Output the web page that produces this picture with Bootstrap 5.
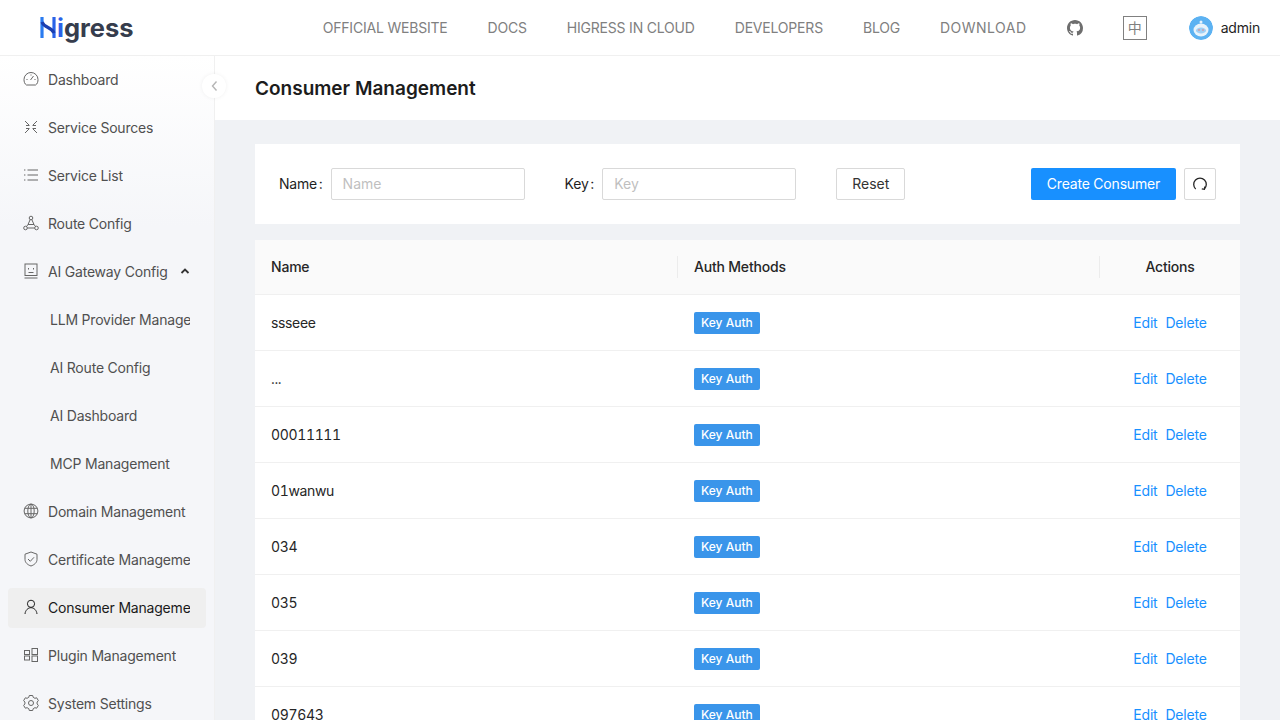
<!DOCTYPE html>
<html lang="en">
<head>
    <meta charset="UTF-8">
    <meta name="viewport" content="width=device-width, initial-scale=1.0">
    <title>Consumer Management</title>
    <link href="https://cdn.jsdelivr.net/npm/bootstrap@5.3.0/dist/css/bootstrap.min.css" rel="stylesheet">
    <style>
        html, body { height: 100%; }
        body {
            font-family: Inter, "Liberation Sans", sans-serif;
            font-size: 14px;
            letter-spacing: -0.2px;
            color: #1f1f1f;
            overflow: hidden;
            background: #f0f2f5;
        }
        .top-bar { height: 56px; background: #fff; border-bottom: 1px solid #f0f0f0; padding-left: 40px; padding-right: 20px; }
        .logo-text { font-size: 25.5px; font-weight: 700; color: #363d4d; line-height: 1; letter-spacing: 0; margin-left: 1px; }
        .logo-i { color: #2a62e8; }
        .top-links { gap: 40px; margin-right: 40px; }
        .top-links a { color: #808080; text-decoration: none; text-transform: uppercase; letter-spacing: -0.2px; }
        .top-links a:last-child { letter-spacing: 0.5px; }
        .lang-box { width: 24px; height: 24px; border: 1px solid #808080; color: #808080; font-family: "Noto Sans CJK SC", sans-serif; margin: 0 42px 0 40px; }
        .avatar { width: 24px; height: 24px; border-radius: 50%; margin-right: 8px; }
        .shell { height: 664px; }
        .side-menu { width: 215px; flex: none; position: relative; border-right: 1px solid #f0f0f0; background: linear-gradient(#fff, #f5f6f9 170px); padding: 4px 8px; }
        .menu-entry { height: 40px; margin-bottom: 8px; padding: 0 16px 2px 16px; border-radius: 4px; color: #505050; white-space: nowrap; }
        .menu-entry svg { width: 16px; height: 16px; flex: none; margin: 0 9px 0 -1px; fill: none; stroke: #666; stroke-width: 1; }
        .menu-entry span { overflow: hidden; flex: 0 1 auto; }
        .menu-sub { padding-left: 42px; }
        .menu-on { background: #efefef; color: #1a1a1a; }
        .menu-on svg { stroke: #222; }
        .menu-caret { width: 10px !important; height: 10px !important; margin: 0 0 0 12px !important; stroke: #333 !important; stroke-width: 1.8 !important; }
        .collapse-btn { position: absolute; right: -12px; top: 18px; width: 24px; height: 24px; border-radius: 50%; background: #fff; box-shadow: 0 0 4px rgba(0,0,0,.06); z-index: 2; }
        .page-head { height: 64px; background: #fff; padding: 2px 0 0 40px; font-size: 19px; font-weight: 600; letter-spacing: 0; color: #1c1c1c; }
        .page-body { padding: 24px 40px; }
        .filter-box { height: 80px; background: #fff; padding: 0 24px; margin-bottom: 16px; }
        .filter-label { margin-right: 8px; padding-bottom: 2px; word-spacing: -2px; }
        .filter-input { width: 194px; height: 32px; border: 1px solid #d9d9d9; border-radius: 2px; padding: 0 11px 2px; font-size: 14px; color: #333; outline: none; margin-right: 40px; }
        .filter-input::placeholder { color: #bfbfbf; }
        .plain-btn { height: 32px; border: 1px solid #d9d9d9; border-radius: 2px; background: #fff; color: #333; font-size: 14px; padding: 0 15px 2px; }
        .main-btn { height: 32px; border: 0; border-radius: 2px; background: #1890ff; color: #fff; font-size: 14px; letter-spacing: -0.2px; padding: 0 16px 2px; margin-right: 8px; }
        .icon-btn { width: 32px; padding: 0; }
        .data-table { table-layout: fixed; width: 100%; margin: 0; background: #fff; --bs-table-bg: transparent; }
        .data-table th { height: 54px; background: #fafafa; font-weight: 500; padding: 0 16px; vertical-align: middle; border-bottom: 1px solid #f0f0f0; color: #262626; position: relative; }
        .data-table td { height: 56px; padding: 0 16px; vertical-align: middle; border-bottom: 1px solid #f0f0f0; color: #262626; }
        .data-table td:first-child { font-variant-numeric: tabular-nums; letter-spacing: -0.35px; }
        .head-split::after { content: ""; position: absolute; right: 0; top: 16px; height: 22px; width: 1px; background: #ececec; }
        .auth-tag { display: inline-block; height: 22px; line-height: 21px; padding: 0 7px; background: #3a95ea; color: #fff; font-size: 12px; font-weight: 500; letter-spacing: 0; border-radius: 2px; }
        .row-link { color: #1890ff; text-decoration: none; margin-right: 8px; }
    </style>
</head>
<body>
    <!-- Top bar -->
    <header class="top-bar d-flex align-items-center">
        <div class="d-flex align-items-center">
            <svg width="16" height="23" viewBox="0 0 16 23" fill="none">
                <path d="M2 1v21" stroke="#2a7bf0" stroke-width="3.2"/>
                <path d="M14 1v21" stroke="#2a62e8" stroke-width="3.2"/>
                <path d="M2 6c2 6 10 5 12 11" stroke="#1c3fb0" stroke-width="3.2"/>
            </svg>
            <span class="logo-text"><span class="logo-i">i</span>gress</span>
        </div>
        <nav class="top-links d-flex ms-auto">
            <a href="#">Official Website</a>
            <a href="#">Docs</a>
            <a href="#">Higress in Cloud</a>
            <a href="#">Developers</a>
            <a href="#">Blog</a>
            <a href="#">Download</a>
        </nav>
        <svg width="16" height="16" viewBox="0 0 16 16" fill="#6e6e6e">
            <path d="M8 0C3.58 0 0 3.58 0 8c0 3.54 2.29 6.53 5.47 7.59.4.07.55-.17.55-.38 0-.19-.01-.82-.01-1.49-2.01.37-2.53-.49-2.69-.94-.09-.23-.48-.94-.82-1.13-.28-.15-.68-.52-.01-.53.63-.01 1.08.58 1.23.82.72 1.21 1.87.87 2.33.66.07-.52.28-.87.51-1.07-1.78-.2-3.64-.89-3.64-3.95 0-.87.31-1.59.82-2.15-.08-.2-.36-1.02.08-2.12 0 0 .67-.21 2.2.82.64-.18 1.32-.27 2-.27s1.36.09 2 .27c1.53-1.04 2.2-.82 2.2-.82.44 1.1.16 1.92.08 2.12.51.56.82 1.27.82 2.15 0 3.07-1.87 3.75-3.65 3.95.29.25.54.73.54 1.48 0 1.07-.01 1.93-.01 2.2 0 .21.15.46.55.38A8.01 8.01 0 0 0 16 8c0-4.42-3.58-8-8-8z"/>
        </svg>
        <div class="lang-box d-flex align-items-center justify-content-center">中</div>
        <svg class="avatar" viewBox="0 0 24 24">
            <circle cx="12" cy="12" r="12" fill="#5cb2f2"/>
            <ellipse cx="12" cy="14" rx="7.500" ry="6.500" fill="#e8f3fb"/>
            <ellipse cx="12" cy="14.500" rx="5" ry="3" fill="#9fd0f5"/>
            <circle cx="10" cy="14" r=".8" fill="#e77"/>
            <circle cx="14" cy="14" r=".8" fill="#e77"/>
            <circle cx="12" cy="6" r="1.500" fill="#e8f3fb"/>
        </svg>
        <span>admin</span>
    </header>

    <div class="shell d-flex">
        <!-- Sidebar -->
        <aside class="side-menu">
            <div class="collapse-btn d-flex align-items-center justify-content-center">
                <svg width="12" height="12" viewBox="0 0 12 12" fill="none" stroke="#b5b5b5" stroke-width="1.4"><path d="M8.500 1.500 4.500 6l4 4.500"/></svg>
            </div>
            <div class="menu-entry d-flex align-items-center">
                <svg viewBox="0 0 16 16"><path d="M3.500 14C1.500 13 1 10.500 1 8.500a7 7 0 0 1 14 0c0 2-.5 4.500-2.500 5.500z"/><path d="M7.500 9l3-4M3.500 8.500h1M11.500 8.500h1M8 3.500v1"/></svg>
                <span>Dashboard</span>
            </div>
            <div class="menu-entry d-flex align-items-center">
                <svg viewBox="0 0 16 16"><path d="M2 2l4 4M14 2l-4 4M2 14l4-4M14 14l-4-4M3 6.500h3.500M13 6.500H9.500M3 9.500h3.500M13 9.500H9.500"/></svg>
                <span>Service Sources</span>
            </div>
            <div class="menu-entry d-flex align-items-center">
                <svg viewBox="0 0 16 16"><path d="M4.500 3h10.500M4.500 8h10.500M4.500 13h10.500M1 3h1.400M1 8h1.400M1 13h1.400"/></svg>
                <span>Service List</span>
            </div>
            <div class="menu-entry d-flex align-items-center">
                <svg viewBox="0 0 16 16"><circle cx="8" cy="3" r="1.800"/><circle cx="2.500" cy="13" r="1.800"/><circle cx="13.500" cy="13" r="1.800"/><path d="M7.200 4.600 5 9.500h6L8.800 4.600M5 9.500l-1.500 2M11 9.500l1.500 2M4.300 13h7.400"/></svg>
                <span>Route Config</span>
            </div>
            <div class="menu-entry d-flex align-items-center">
                <svg viewBox="0 0 16 16"><rect x="2" y="1" width="12" height="11.500"/><path d="M5.500 5v1.500M10.500 5v1.500M5.500 9.500h5M1.500 15h13"/></svg>
                <span>AI Gateway Config</span>
                <svg class="menu-caret" viewBox="0 0 10 10"><path d="M1.500 7 5 3.500 8.500 7"/></svg>
            </div>
            <div class="menu-entry menu-sub d-flex align-items-center"><span>LLM Provider Management</span></div>
            <div class="menu-entry menu-sub d-flex align-items-center"><span>AI Route Config</span></div>
            <div class="menu-entry menu-sub d-flex align-items-center"><span>AI Dashboard</span></div>
            <div class="menu-entry menu-sub d-flex align-items-center"><span>MCP Management</span></div>
            <div class="menu-entry d-flex align-items-center">
                <svg viewBox="0 0 16 16"><circle cx="8" cy="8" r="6.900"/><ellipse cx="8" cy="8" rx="3.200" ry="6.900"/><path d="M1.500 5.300h13M1.500 10.700h13M8 1v14"/></svg>
                <span>Domain Management</span>
            </div>
            <div class="menu-entry d-flex align-items-center">
                <svg viewBox="0 0 16 16"><path d="M8 1l6 2.200v5.300c0 3.200-2.800 5.400-6 6.500-3.200-1.100-6-3.300-6-6.500V3.200z"/><path d="M5 8l2.300 2.300L11 6.300"/></svg>
                <span>Certificate Management</span>
            </div>
            <div class="menu-entry menu-on d-flex align-items-center">
                <svg viewBox="0 0 16 16"><circle cx="8" cy="4.800" r="3.600"/><path d="M2 15c.4-3.800 3-6.300 6-6.300s5.600 2.500 6 6.300"/></svg>
                <span>Consumer Management</span>
            </div>
            <div class="menu-entry d-flex align-items-center">
                <svg viewBox="0 0 16 16"><rect x="1.500" y="3.500" width="5" height="4"/><rect x="1.500" y="9" width="5" height="4"/><rect x="9" y="1.500" width="5.500" height="6"/><rect x="9" y="9" width="5.500" height="5.500"/></svg>
                <span>Plugin Management</span>
            </div>
            <div class="menu-entry d-flex align-items-center">
                <svg viewBox="0 0 16 16"><path d="M6.300 1.500h3.400l.5 1.800 1.700 1 1.800-.5 1.700 2.900-1.300 1.300v2l1.300 1.300-1.700 2.900-1.800-.5-1.700 1-.5 1.800H6.300l-.5-1.800-1.700-1-1.800.5L.6 11.300 1.900 10V8L.6 6.700l1.700-2.900 1.800.5 1.700-1z" transform="translate(0 -1)"/><circle cx="8" cy="8" r="2.500"/></svg>
                <span>System Settings</span>
            </div>
        </aside>

        <!-- Content -->
        <main class="flex-grow-1">
            <div class="page-head d-flex align-items-center">Consumer Management</div>
            <div class="page-body">
                <div class="filter-box d-flex align-items-center">
                    <label class="filter-label">Name :</label>
                    <input class="filter-input" type="text" placeholder="Name">
                    <label class="filter-label">Key :</label>
                    <input class="filter-input" type="text" placeholder="Key">
                    <button class="plain-btn" type="button">Reset</button>
                    <button class="main-btn ms-auto" type="button">Create Consumer</button>
                    <button class="plain-btn icon-btn d-flex align-items-center justify-content-center" type="button">
                        <svg width="16" height="16" viewBox="0 0 16 16" fill="none" stroke="#262626" stroke-width="1.300"><path d="M3.700 13A6.300 6.300 0 1 1 12.300 13"/><path d="M12.800 10.500l-.4 2.800-2.600-.5"/></svg>
                    </button>
                </div>

                <table class="table data-table">
                    <colgroup><col style="width: 423px"><col style="width: 422px"><col></colgroup>
                    <thead>
                        <tr>
                            <th class="head-split">Name</th>
                            <th class="head-split">Auth Methods</th>
                            <th class="text-center">Actions</th>
                        </tr>
                    </thead>
                    <tbody>
                        <tr><td>ssseee</td><td><span class="auth-tag">Key Auth</span></td><td class="text-center"><a class="row-link" href="#">Edit</a><a class="row-link me-0" href="#">Delete</a></td></tr>
                        <tr><td>...</td><td><span class="auth-tag">Key Auth</span></td><td class="text-center"><a class="row-link" href="#">Edit</a><a class="row-link me-0" href="#">Delete</a></td></tr>
                        <tr><td>00011111</td><td><span class="auth-tag">Key Auth</span></td><td class="text-center"><a class="row-link" href="#">Edit</a><a class="row-link me-0" href="#">Delete</a></td></tr>
                        <tr><td>01wanwu</td><td><span class="auth-tag">Key Auth</span></td><td class="text-center"><a class="row-link" href="#">Edit</a><a class="row-link me-0" href="#">Delete</a></td></tr>
                        <tr><td>034</td><td><span class="auth-tag">Key Auth</span></td><td class="text-center"><a class="row-link" href="#">Edit</a><a class="row-link me-0" href="#">Delete</a></td></tr>
                        <tr><td>035</td><td><span class="auth-tag">Key Auth</span></td><td class="text-center"><a class="row-link" href="#">Edit</a><a class="row-link me-0" href="#">Delete</a></td></tr>
                        <tr><td>039</td><td><span class="auth-tag">Key Auth</span></td><td class="text-center"><a class="row-link" href="#">Edit</a><a class="row-link me-0" href="#">Delete</a></td></tr>
                        <tr><td>097643</td><td><span class="auth-tag">Key Auth</span></td><td class="text-center"><a class="row-link" href="#">Edit</a><a class="row-link me-0" href="#">Delete</a></td></tr>
                    </tbody>
                </table>
            </div>
        </main>
    </div>

    <script src="https://cdn.jsdelivr.net/npm/bootstrap@5.3.0/dist/js/bootstrap.bundle.min.js"></script>
</body>
</html>
